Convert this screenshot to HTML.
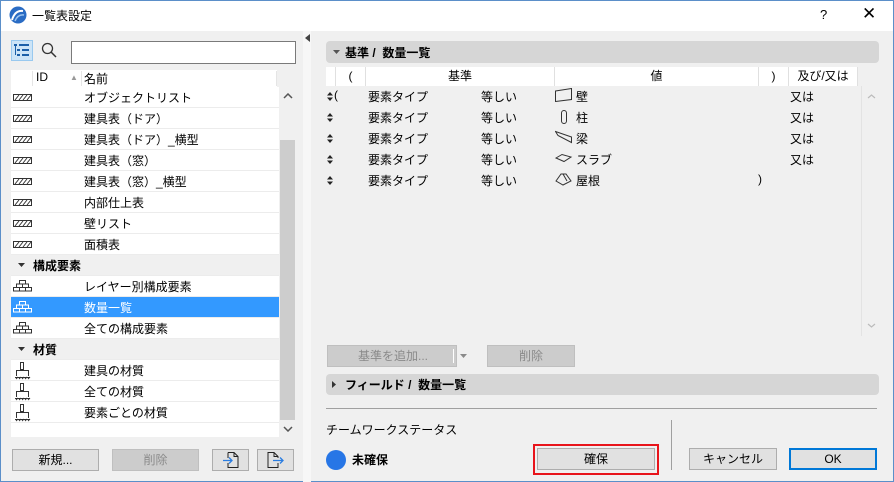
<!DOCTYPE html>
<html><head><meta charset="utf-8"><style>
*{box-sizing:border-box;margin:0;padding:0}
body{width:894px;height:482px;overflow:hidden;background:#f0f0f0;font-family:"Liberation Sans","Noto Sans CJK JP",sans-serif;font-size:12px;color:#000;position:relative}
.a{position:absolute;white-space:nowrap}
.row{position:absolute;left:11px;width:268px;height:21px;background:#fff;border-bottom:1px solid #ececec}
.row span{position:absolute;left:73px;top:2px}
.grp{background:#f0f0f0;font-weight:bold}
.grp span{left:22px}
.sel{background:#3399ff;color:#fff}
.btn{position:absolute;height:22px;background:#e1e1e1;border:1px solid #adadad;text-align:center;line-height:20px}
.dis{background:#cccccc;border-color:#bfbfbf;color:#8a8a8a}
.hdr{position:absolute;left:326px;width:553px;background:#d6d6d6;border-radius:4px;font-weight:bold}
.th{position:absolute;top:67px;height:19px;background:#fff;text-align:center;line-height:19px;border-right:1px solid #e0e0e0}
.tr{position:absolute;left:326px;height:21px;width:530px}
.tr span{position:absolute;top:2px}
</style></head><body>
<div class="a" style="left:0;top:0;width:894px;height:482px;border:1px solid #5b8fc9"></div>
<div class="a" style="left:1px;top:1px;width:892px;height:30px;background:#fff"></div>
<svg class="a" style="left:9px;top:6px" width="18" height="18"><circle cx="9" cy="9" r="8.5" fill="#2a6cc4"/><path d="M3 14 Q6 4 14 5" stroke="#fff" stroke-width="2" fill="none"/><path d="M6 15 Q9 8 15 9" stroke="#9cc4ef" stroke-width="1.5" fill="none"/></svg>
<div class="a" style="left:32px;top:7px;font-size:12px">一覧表設定</div>
<div class="a" style="left:820px;top:7px;font-size:13px">?</div>
<div class="a" style="left:862px;top:4px;font-size:17px">✕</div>

<div class="a" style="left:11px;top:40px;width:22px;height:21px;background:#cce4f7;border:1px solid #99c9ef"></div>
<svg class="a" style="left:14px;top:44px" width="16" height="13"><g fill="#1b5fa8"><rect x="0" y="0" width="3" height="2"/><rect x="5" y="0" width="10" height="2"/><rect x="3" y="5" width="3" height="2"/><rect x="8" y="5" width="7" height="2"/><rect x="3" y="10" width="3" height="2"/><rect x="8" y="10" width="7" height="2"/><rect x="1" y="2" width="1" height="9"/></g></svg>
<svg class="a" style="left:41px;top:42px" width="16" height="16"><circle cx="6.5" cy="6.5" r="5" stroke="#333" stroke-width="1.3" fill="none"/><path d="M10 10 L15 15" stroke="#333" stroke-width="1.5"/></svg>
<div class="a" style="left:71px;top:41px;width:225px;height:23px;background:#fff;border:1px solid #7a7a7a"></div>

<div class="a" style="left:11px;top:70px;width:266px;height:17px;background:#fff"></div>
<div class="a" style="left:32px;top:71px;width:1px;height:15px;background:#e5e5e5"></div>
<div class="a" style="left:81px;top:71px;width:1px;height:15px;background:#e5e5e5"></div>
<div class="a" style="left:276px;top:71px;width:1px;height:15px;background:#e5e5e5"></div>
<div class="a" style="left:36px;top:70px">ID</div>
<div class="a" style="left:70px;top:73px;font-size:8px;color:#999">▲</div>
<div class="a" style="left:84px;top:70px">名前</div>
<div class="a" style="left:11px;top:87px;width:268px;height:350px;background:#fff"></div>
<div class="a" style="left:280px;top:140px;width:15px;height:280px;background:#cdcdcd"></div>
<svg class="a" style="left:283px;top:93px" width="10" height="6"><path d="M1 5 L5 1 L9 5" fill="none" stroke="#555" stroke-width="1.5"/></svg>
<svg class="a" style="left:283px;top:426px" width="10" height="6"><path d="M1 1 L5 5 L9 1" fill="none" stroke="#555" stroke-width="1.5"/></svg>

<div id="list"></div>
<script>
const H='<svg style="position:absolute;left:2px;top:7px" width="19" height="7"><rect x="0.5" y="0.5" width="18" height="6" fill="#fff" stroke="#333"/><path d="M2 6 L6 1 M6 6 L10 1 M10 6 L14 1 M14 6 L18 1" stroke="#333"/></svg>';
const B='<svg style="position:absolute;left:2px;top:4px" width="19" height="12"><g fill="none" stroke="#333"><rect x="6.5" y="0.5" width="6" height="3.5"/><rect x="3.5" y="4" width="12" height="3.5"/><rect x="0.5" y="7.5" width="18" height="3.5"/><path d="M9.5 4v3.5M6.5 7.5v3.5M12.5 7.5v3.5"/></g></svg>';
const Bw=B.replace(/#333/g,'#fff');
const M='<svg style="position:absolute;left:4px;top:2px" width="16" height="18"><g fill="none" stroke="#333"><rect x="5.5" y="0.5" width="3" height="7"/><path d="M1.5 14 V8.5 H13.5 V14"/><path d="M0 15.5 H15"/></g><path d="M1 17 L3 15 M4 17 L6 15 M7 17 L9 15 M10 17 L12 15 M13 17 L15 15" stroke="#333"/></svg>';
const rows=[[H,'オブジェクトリスト'],[H,'建具表（ドア）'],[H,'建具表（ドア）_横型'],[H,'建具表（窓）'],[H,'建具表（窓）_横型'],[H,'内部仕上表'],[H,'壁リスト'],[H,'面積表'],['g','構成要素'],[B,'レイヤー別構成要素'],['s','数量一覧'],[B,'全ての構成要素'],['g','材質'],[M,'建具の材質'],[M,'全ての材質'],[M,'要素ごとの材質']];
let h='';rows.forEach((r,i)=>{const y=87+i*21;
if(r[0]=='g')h+=`<div class="row grp" style="top:${y}px"><svg style="position:absolute;left:7px;top:8px" width="7" height="5"><path d="M0 0 H7 L3.5 4Z" fill="#333"/></svg><span>${r[1]}</span></div>`;
else if(r[0]=='s')h+=`<div class="row sel" style="top:${y}px">${Bw}<span>${r[1]}</span></div>`;
else h+=`<div class="row" style="top:${y}px">${r[0]}<span>${r[1]}</span></div>`;});
document.getElementById('list').innerHTML=h;
</script>

<div class="btn" style="left:12px;top:449px;width:87px">新規...</div>
<div class="btn dis" style="left:112px;top:449px;width:87px">削除</div>
<div class="btn" style="left:212px;top:449px;width:37px"><svg width="20" height="18" style="margin-top:1px"><path d="M7 1.5 H13 L17 5.5 V16.5 H7 V12 M7 7 V1.5 M13 1.5 V5.5 H17" fill="none" stroke="#222"/><path d="M2 9.5 H11 M8 6.5 L11 9.5 L8 12.5" fill="none" stroke="#2a7de1" stroke-width="1.3"/></svg></div>
<div class="btn" style="left:257px;top:449px;width:37px"><svg width="20" height="18" style="margin-top:1px"><path d="M12 12 V16.5 H2 V1.5 H8 L12 5.5 V7 M8 1.5 V5.5 H12" fill="none" stroke="#222"/><path d="M7 9.5 H17 M14 6.5 L17 9.5 L14 12.5" fill="none" stroke="#2a7de1" stroke-width="1.3"/></svg></div>

<div class="a" style="left:303px;top:31px;width:8px;height:451px;background:#f7f7f7"></div>
<svg class="a" style="left:305px;top:34px" width="5" height="8"><path d="M5 0 V8 L0 4Z" fill="#444"/></svg>

<div class="hdr" style="top:41px;height:22px"><svg class="a" style="left:7px;top:9px" width="7" height="5"><path d="M0 0 H7 L3.5 4Z" fill="#555"/></svg><span class="a" style="left:19px;top:3px">基準 /&nbsp; 数量一覧</span></div>
<div class="th" style="left:326px;width:10px"></div>
<div class="th" style="left:336px;width:30px">(</div>
<div class="th" style="left:366px;width:189px">基準</div>
<div class="th" style="left:555px;width:204px">値</div>
<div class="th" style="left:759px;width:30px">)</div>
<div class="th" style="left:789px;width:69px">及び/又は</div>
<div class="a" style="left:861px;top:86px;width:1px;height:250px;background:#e3e3e3"></div>
<svg class="a" style="left:867px;top:94px" width="9" height="5"><path d="M1 4 L4.5 1 L8 4" fill="none" stroke="#bbb" stroke-width="1.2"/></svg>
<svg class="a" style="left:867px;top:323px" width="9" height="5"><path d="M1 1 L4.5 4 L8 1" fill="none" stroke="#bbb" stroke-width="1.2"/></svg>
<div id="tbl"></div>
<script>
const v=[['<svg width="18" height="14"><path d="M0.5 3 L16.5 0.5 V11.5 L0.5 13.5Z" fill="none" stroke="#333"/></svg>','壁','又は','('],
['<svg width="18" height="16"><rect x="6.5" y="1.5" width="5" height="13" rx="2.5" fill="none" stroke="#333"/></svg>','柱','又は',''],
['<svg width="18" height="14"><path d="M0.5 1.5 L16.5 7 V12.5 L3 5.5Z" fill="none" stroke="#333"/></svg>','梁','又は',''],
['<svg width="18" height="14"><path d="M1 7 L7 3.5 L16 6 L9 10.5Z M1 7 L9 10.5" fill="none" stroke="#333"/></svg>','スラブ','又は',''],
['<svg width="18" height="14"><path d="M1 9 L6 2 L11 2 L16 9 L8 13Z M8 2 L12 9" fill="none" stroke="#333"/></svg>','屋根','','']];
const S='<svg style="position:absolute;left:1px;top:6px" width="6" height="9"><path d="M0 3.5 L3 0 L6 3.5Z M0 5.5 L3 9 L6 5.5Z" fill="#222"/></svg>';
let t='';v.forEach((r,i)=>{const y=86+i*21;
t+=`<div class="tr" style="top:${y}px">${S}<span style="left:8px">${r[3]}</span><span style="left:42px">要素タイプ</span><span style="left:155px">等しい</span><span style="left:229px;top:2px">${r[0]}</span><span style="left:250px">${r[1]}</span><span style="left:464px">${r[2]}</span>${i==4?'<span style="left:432px">)</span>':''}</div>`;});
document.getElementById('tbl').innerHTML=t;
</script>

<div class="btn dis" style="left:327px;top:345px;width:130px;text-align:left;padding-left:30px">基準を追加...<span style="position:absolute;left:125px;top:3px;width:1px;height:14px;background:#fff"></span><svg style="position:absolute;left:132px;top:8px" width="7" height="5"><path d="M0 0 H7 L3.5 4Z" fill="#8a8a8a"/></svg></div>
<div class="btn dis" style="left:487px;top:345px;width:88px">削除</div>

<div class="hdr" style="top:374px;height:21px"><svg class="a" style="left:6px;top:7px" width="5" height="7"><path d="M0 0 V7 L4 3.5Z" fill="#333"/></svg><span class="a" style="left:19px;top:2px">フィールド /&nbsp; 数量一覧</span></div>
<div class="a" style="left:326px;top:408px;width:551px;height:1px;background:#a0a0a0"></div>
<div class="a" style="left:671px;top:420px;width:1px;height:50px;background:#a0a0a0"></div>
<div class="a" style="left:326px;top:421px">チームワークステータス</div>
<div class="a" style="left:326px;top:450px;width:20px;height:20px;border-radius:50%;background:#2776e6"></div>
<div class="a" style="left:352px;top:451px;font-weight:bold">未確保</div>
<div class="a" style="left:533px;top:444px;width:126px;height:31px;border:2px solid #e8141b"></div>
<div class="btn" style="left:537px;top:448px;width:118px">確保</div>
<div class="btn" style="left:689px;top:448px;width:88px">キャンセル</div>
<div class="btn" style="left:789px;top:448px;width:88px;border:2px solid #0078d7;line-height:18px">OK</div>
</body></html>
